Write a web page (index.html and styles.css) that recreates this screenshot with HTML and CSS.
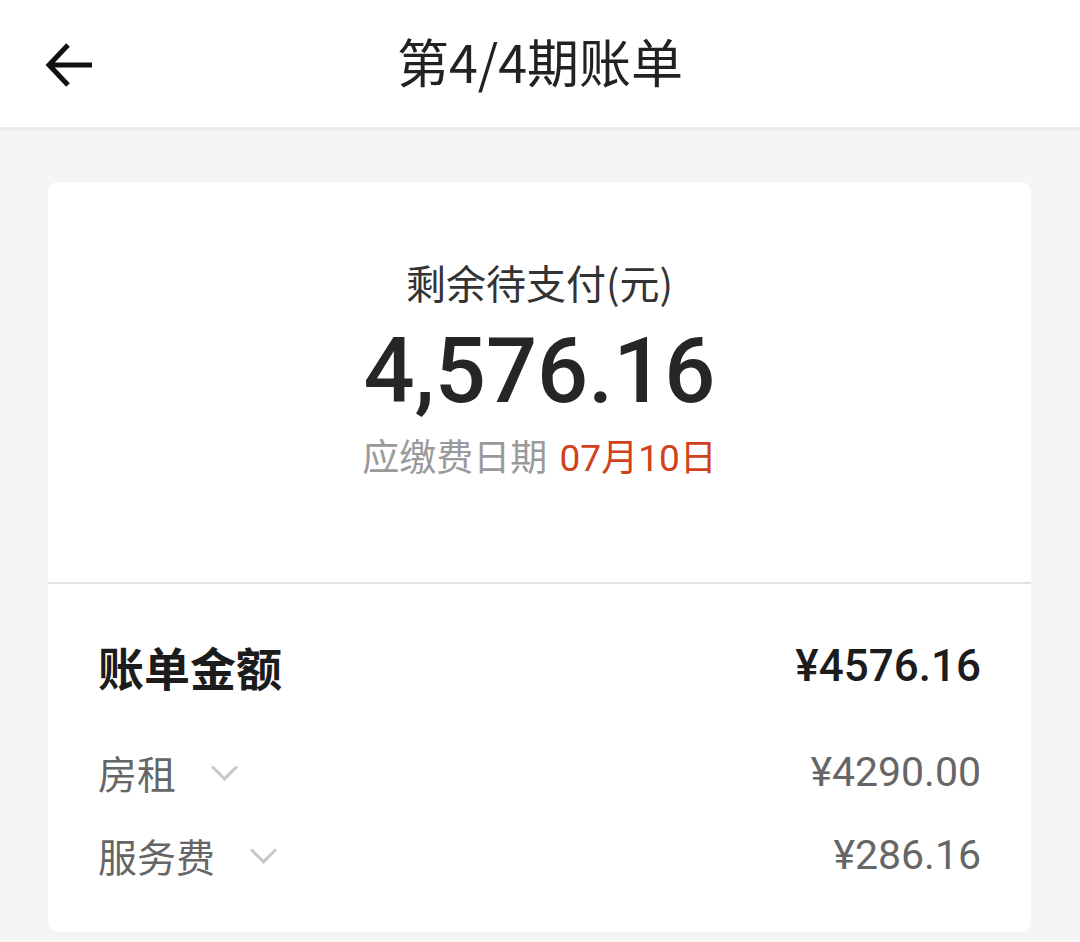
FILE: index.html
```html
<!DOCTYPE html>
<html lang="zh-CN">
<head>
    <meta charset="UTF-8">
    <meta name="viewport" content="width=device-width, initial-scale=1.0">
    <title>第4/4期账单</title>
    <link rel="stylesheet" href="styles.css">
</head>
<body>

    <!-- Header -->
    <header class="topbar">
        <a class="back" href="#">
            <svg width="52" height="48" viewBox="0 0 52 48">
                <path d="M48 24 H6 M24 4 L5 24 L24 44" fill="none" stroke="#111" stroke-width="5"/>
            </svg>
        </a>
        <h1>第4/4期账单</h1>
    </header>

    <!-- Bill card -->
    <div class="card">
        <div class="summary">
            <p class="label">剩余待支付(元)</p>
            <p class="amount">4,576.16</p>
            <p class="due">应缴费日期 <span class="due-date">07月10日</span></p>
        </div>

        <div class="detail">
            <div class="row total">
                <span>账单金额</span>
                <span class="num">¥4576.16</span>
            </div>
            <div class="row item">
                <span>房租 <i class="chevron"></i></span>
                <span class="num">¥4290.00</span>
            </div>
            <div class="row item">
                <span>服务费 <i class="chevron"></i></span>
                <span class="num">¥286.16</span>
            </div>
        </div>
    </div>

</body>
</html>
```

FILE: styles.css
```css
body {
    font-family: "Noto Sans CJK SC", "Noto Sans", sans-serif;
    margin: 0;
    padding: 0;
    background-color: #f5f5f5;
    color: #222;
}
.topbar {
    position: relative;
    height: 127px;
    background-color: white;
    border-bottom: 3px solid #ececec;
    display: flex;
    align-items: center;
    justify-content: center;
}
.topbar h1 {
    margin: 0;
    font-size: 52px;
    font-weight: 400;
    color: #222;
    margin-top: -6px;
}
.back {
    position: absolute;
    left: 44px;
    top: 41px;
    display: block;
    line-height: 0;
}
.card {
    margin: 52px 49px 0 48px;
    background-color: white;
    border-radius: 10px;
    overflow: hidden;
}
.summary {
    height: 402px;
    border-bottom: 2px solid #e2e2e2;
    text-align: center;
    padding-top: 70px;
    box-sizing: border-box;
}
.summary p {
    margin: 0;
}
.label {
    font-size: 40px;
    line-height: 60px;
    color: #333;
}
.amount {
    font-family: Roboto, "Noto Sans", sans-serif;
    font-size: 90px;
    font-weight: 500;
    line-height: 110px;
    color: #262626;
    margin-top: 5px !important;
}
.due {
    font-size: 37px;
    line-height: 50px;
    color: #9a9a9a;
    margin-top: 3px !important;
}
.due-date {
    font-family: Roboto, "Noto Sans CJK SC", sans-serif;
    color: #d0421b;
    margin-left: 4px;
}
.detail {
    padding: 50px 50px 24px 50px;
}
.row {
    display: flex;
    justify-content: space-between;
    align-items: center;
}
.row.total {
    font-size: 46px;
    font-weight: 700;
    color: #1c1c1c;
    height: 64px;
    margin-bottom: 44px;
}
.row.total .num {
    font-size: 44px;
    font-weight: 500;
}
.row.item {
    font-size: 39px;
    color: #666;
    height: 60px;
    margin-bottom: 23px;
}
.row.item .num {
    font-size: 41px;
}
.num {
    font-family: Roboto, "Noto Sans", sans-serif;
}
.chevron {
    display: inline-block;
    width: 16px;
    height: 16px;
    border-right: 3px solid #c8c8c8;
    border-bottom: 3px solid #c8c8c8;
    transform: rotate(45deg);
    margin-left: 30px;
    vertical-align: 12px;
}
```
